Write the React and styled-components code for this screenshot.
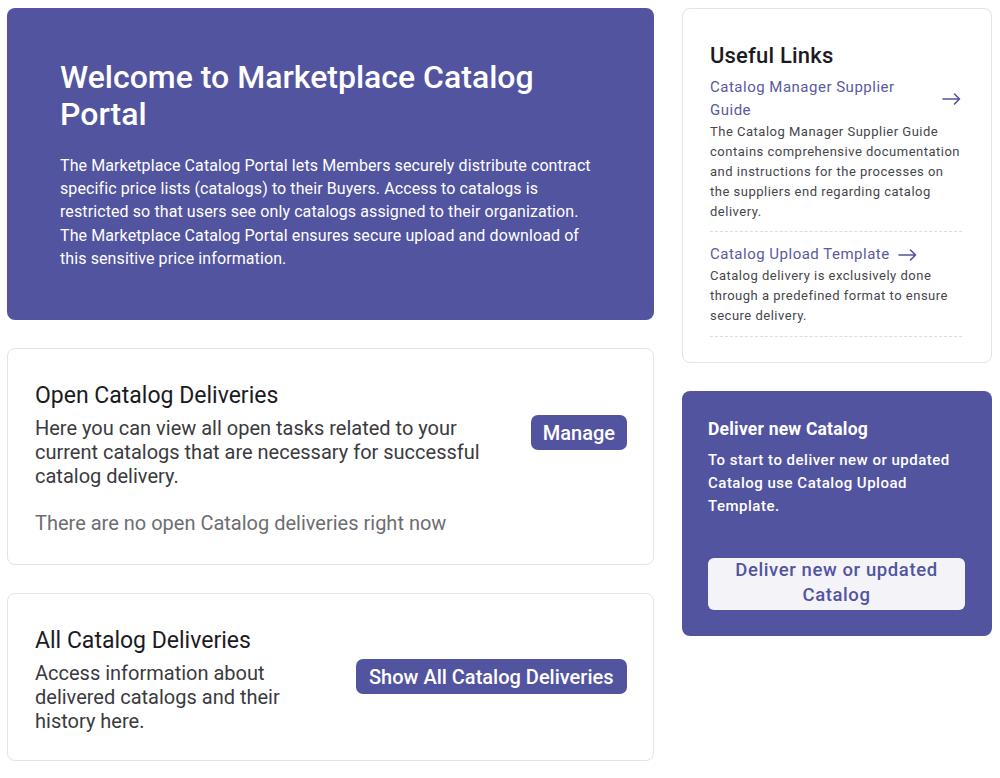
import React from "react";
import styled, { createGlobalStyle } from "styled-components";

const Global = createGlobalStyle`
  html, body { margin: 0; padding: 0; background: #ffffff; }
  body { font-family: Roboto, "Liberation Sans", sans-serif; -webkit-font-smoothing: antialiased; }
  * { box-sizing: border-box; }
`;

const PURPLE = "#5254a0";

const Page = styled.div`
  display: grid;
  grid-template-columns: 1fr 310px;
  column-gap: 28px;
  padding: 8px 8px 8px 7px;
  align-items: start;
`;

const Column = styled.div`
  display: flex;
  flex-direction: column;
  gap: 28px;
`;

const Hero = styled.section`
  background: ${PURPLE};
  border-radius: 8px;
  color: #ffffff;
  padding: 51px 53px 50px 53px;
  min-height: 312px;
`;

const HeroTitle = styled.h1`
  margin: 0 0 21px;
  font-size: 32px;
  line-height: 37px;
  font-weight: 500;
  letter-spacing: 0;
`;

const HeroText = styled.p`
  margin: 0;
  font-size: 16px;
  line-height: 23.2px;
  letter-spacing: 0.1px;
`;

const Card = styled.section`
  border: 1px solid #e3e3ea;
  border-radius: 8px;
  background: #fff;
  padding: ${(p) => p.$pad};
`;

const CardTitle = styled.h2`
  margin: 0 0 6px;
  font-size: 23px;
  line-height: 28px;
  font-weight: 400;
  color: #1b1b1f;
`;

const Row = styled.div`
  display: flex;
  align-items: flex-start;
  justify-content: space-between;
  gap: 24px;
`;

const Desc = styled.p`
  flex: 1;
  margin: 0;
  font-size: 20px;
  line-height: 24px;
  color: #3a3a40;
`;

const Empty = styled.p`
  margin: 23px 0 0;
  font-size: 20px;
  line-height: 24px;
  color: #6d6d73;
`;

const PrimaryButton = styled.button`
  flex: none;
  margin-top: ${(p) => p.$top || "0"};
  background: ${PURPLE};
  color: #fff;
  border: none;
  border-radius: 7px;
  height: 35px;
  padding: 0 ${(p) => p.$px || "12px"};
  font-family: Roboto, "Liberation Sans", sans-serif;
  font-size: 20px;
  font-weight: 500;
  cursor: pointer;
`;

const LinksCard = styled.section`
  border: 1px solid #e3e3ea;
  border-radius: 8px;
  background: #fff;
  padding: 33px 29px 25px 27px;
`;

const LinksTitle = styled.h2`
  margin: 0 0 6px;
  font-size: 22px;
  line-height: 28px;
  font-weight: 500;
  color: #1b1b1f;
  letter-spacing: 0.2px;
`;

const LinkItem = styled.div`
  padding: ${(p) => (p.$first ? "0 0 9px" : "11px 0 10px")};
  border-bottom: 1px dashed #dcdce3;
`;

const LinkRow = styled.a`
  display: flex;
  align-items: center;
  gap: 8px;
  justify-content: ${(p) => (p.$spread ? "space-between" : "flex-start")};
  color: #5a5a9c;
  font-size: 15px;
  line-height: 23px;
  letter-spacing: 0.5px;
  text-decoration: none;
  cursor: pointer;
`;

const LinkText = styled.span`
  flex: 0 1 auto;
`;

const Arrow = styled.svg`
  flex: none;
  width: 19px;
  height: 12px;
  margin-right: ${(p) => p.$mr || "0"};
`;

const LinkDesc = styled.p`
  margin: 0;
  font-size: 13px;
  line-height: 20px;
  letter-spacing: 0.5px;
  color: #46464c;
`;

const DeliverCard = styled.section`
  background: ${PURPLE};
  border-radius: 8px;
  color: #fff;
  padding: 25px 27px 26px 26px;
`;

const DeliverTitle = styled.h3`
  margin: 0 0 7px;
  font-size: 17.5px;
  line-height: 26px;
  font-weight: 700;
  letter-spacing: 0.2px;
`;

const DeliverText = styled.p`
  margin: 0 0 40px;
  font-size: 15px;
  line-height: 23px;
  font-weight: 500;
  letter-spacing: 0.5px;
`;

const LightButton = styled.button`
  display: block;
  width: 100%;
  background: #f4f4f8;
  color: ${PURPLE};
  border: none;
  border-radius: 6px;
  padding: 0 16px 2px;
  font-family: Roboto, "Liberation Sans", sans-serif;
  font-size: 18.5px;
  line-height: 25px;
  font-weight: 500;
  letter-spacing: 0.6px;
  cursor: pointer;
`;

const ArrowIcon = ({ mr }) => (
  <Arrow $mr={mr} viewBox="0 0 19 12" fill="none">
    <path d="M1 6h16.5M12.5 1l5 5-5 5" stroke="#5254a0" strokeWidth="1.6" strokeLinecap="round" strokeLinejoin="round" />
  </Arrow>
);

export default function App() {
  return (
    <>
      <Global />
      <Page>
        <Column>
          <Hero>
            <HeroTitle>Welcome to Marketplace Catalog Portal</HeroTitle>
            <HeroText>
              The Marketplace Catalog Portal lets Members securely distribute contract specific price lists
              (catalogs) to their Buyers. Access to catalogs is restricted so that users see only catalogs
              assigned to their organization. The Marketplace Catalog Portal ensures secure upload and
              download of this sensitive price information.
            </HeroText>
          </Hero>

          <Card $pad="33px 26px 29px 27px">
            <CardTitle>Open Catalog Deliveries</CardTitle>
            <Row>
              <Desc>
                Here you can view all open tasks related to your current catalogs that are necessary for
                successful catalog delivery.
              </Desc>
              <PrimaryButton $top="-1px">Manage</PrimaryButton>
            </Row>
            <Empty>There are no open Catalog deliveries right now</Empty>
          </Card>

          <Card $pad="33px 26px 27px 27px">
            <CardTitle>All Catalog Deliveries</CardTitle>
            <Row>
              <Desc>Access information about delivered catalogs and their history here.</Desc>
              <PrimaryButton $top="-2px" $px="13.5px">Show All Catalog Deliveries</PrimaryButton>
            </Row>
          </Card>
        </Column>

        <Column>
          <LinksCard>
            <LinksTitle>Useful Links</LinksTitle>
            <LinkItem $first>
              <LinkRow $spread>
                <LinkText>Catalog Manager Supplier Guide</LinkText>
                <ArrowIcon mr="1px" />
              </LinkRow>
              <LinkDesc>
                The Catalog Manager Supplier Guide contains comprehensive documentation and instructions for
                the processes on the suppliers end regarding catalog delivery.
              </LinkDesc>
            </LinkItem>
            <LinkItem>
              <LinkRow>
                <LinkText>Catalog Upload Template</LinkText>
                <ArrowIcon />
              </LinkRow>
              <LinkDesc>
                Catalog delivery is exclusively done through a predefined format to ensure secure delivery.
              </LinkDesc>
            </LinkItem>
          </LinksCard>

          <DeliverCard>
            <DeliverTitle>Deliver new Catalog</DeliverTitle>
            <DeliverText>To start to deliver new or updated Catalog use Catalog Upload Template.</DeliverText>
            <LightButton>Deliver new or updated Catalog</LightButton>
          </DeliverCard>
        </Column>
      </Page>
    </>
  );
}
